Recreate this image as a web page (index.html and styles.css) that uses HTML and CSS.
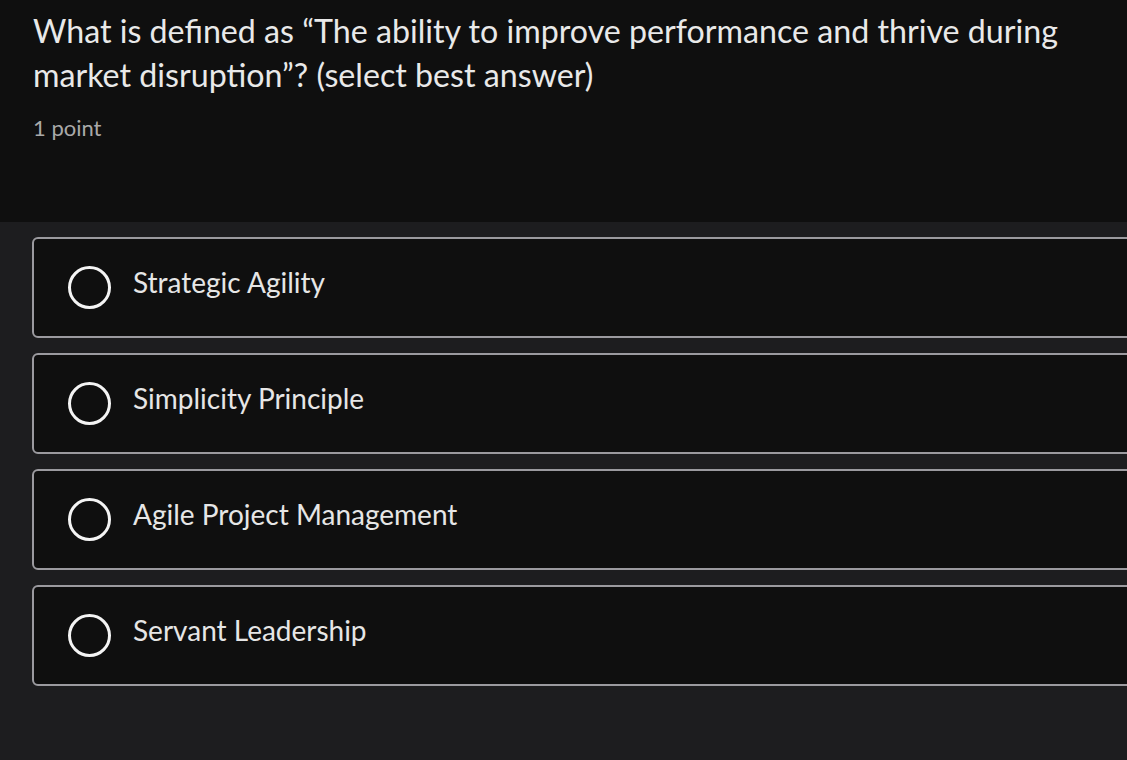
FILE: index.html
```html
<!DOCTYPE html>
<html>
<head>
<meta charset="utf-8">
<link rel="stylesheet" href="styles.css">
</head>
<body>
<div class="page">
  <header class="question">
    <h1 class="title">What is defined as “The ability to improve performance and thrive during market disruption”? (select best answer)</h1>
    <div class="points">1 point</div>
  </header>
  <main class="options">
    <label class="option"><span class="radio"></span><span class="label">Strategic Agility</span></label>
    <label class="option"><span class="radio"></span><span class="label">Simplicity Principle</span></label>
    <label class="option"><span class="radio"></span><span class="label">Agile Project Management</span></label>
    <label class="option"><span class="radio"></span><span class="label">Servant Leadership</span></label>
  </main>
</div>
</body>
</html>
```

FILE: styles.css
```css
html, body {
  margin: 0;
  padding: 0;
  background: #1d1d1f;
  overflow: hidden;
}
body {
  font-family: "Lato", "Open Sans", sans-serif;
  color: #e8e8e8;
}
.page {
  width: 1127px;
  height: 760px;
  overflow: hidden;
}
.question {
  background: #0f0f0f;
  height: 222px;
  box-sizing: border-box;
  padding: 9px 20px 0 33px;
}
.title {
  margin: 0;
  font-size: 32.2px;
  line-height: 44px;
  font-weight: 400;
  letter-spacing: 0;
  color: #e9e9e9;
}
.points {
  margin-top: 17px;
  font-size: 22px;
  color: #a9a9a9;
}
.options {
  display: flex;
  flex-direction: column;
  gap: 15px;
  padding: 15px 0 0 32px;
}
.option {
  display: flex;
  align-items: center;
  width: 1200px;
  height: 101px;
  box-sizing: border-box;
  border: 2px solid #9b9a9f;
  border-radius: 6px;
  background: #0f0f0f;
  padding-left: 34px;
}
.radio {
  width: 43px;
  height: 43px;
  box-sizing: border-box;
  border: 3px solid #f4f4f4;
  border-radius: 50%;
  flex: none;
}
.label {
  margin-left: 22px;
  font-size: 28px;
  color: #e6e6e6;
  margin-bottom: 12px;
}
```
